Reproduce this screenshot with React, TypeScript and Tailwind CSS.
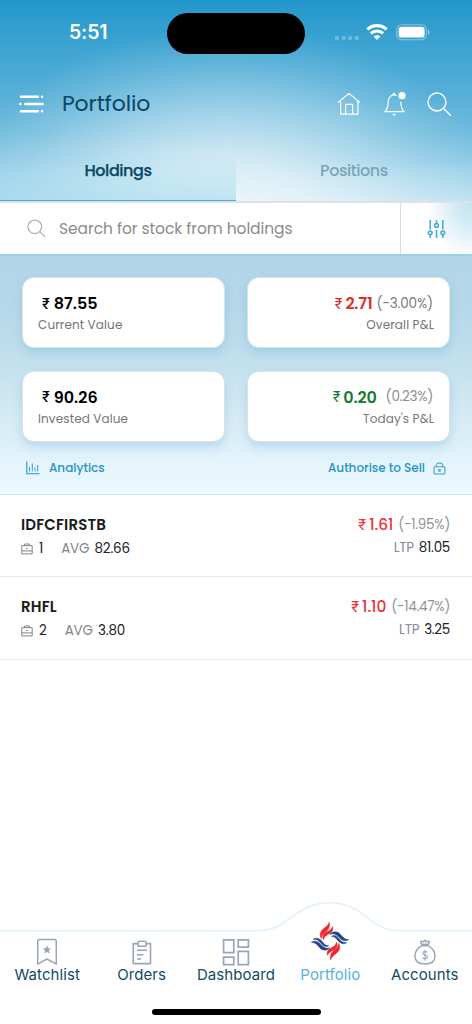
import type { ReactNode } from "react";

const holdings = [
  { symbol: "IDFCFIRSTB", qty: 1, avg: "82.66", pnl: "1.61", pct: "(-1.95%)", ltp: "81.05" },
  { symbol: "RHFL", qty: 2, avg: "3.80", pnl: "1.10", pct: "(-14.47%)", ltp: "3.25" },
];

function StatusBar() {
  return (
    <div className="flex h-[66px] items-center">
      <p className="w-[167px] pl-[69px] font-['Inter',sans-serif] text-[19.5px] font-semibold leading-none tracking-[-0.15px] text-white">5:51</p>
      <div className="h-[41px] w-[138px] rounded-full bg-black" />
      <div className="ml-[29px] flex items-center">
        <svg width="26" height="6" viewBox="0 0 26 6" className="mt-[9px]" fill="#fff" fillOpacity="0.27">
          <circle cx="3" cy="3" r="2.2" />
          <circle cx="9.7" cy="3" r="2.2" />
          <circle cx="16.2" cy="3" r="2.2" />
          <circle cx="22.8" cy="3" r="2.2" />
        </svg>
        <svg width="22" height="16" viewBox="0 0 22 16" className="ml-[6px] -mt-[2px]" fill="none" stroke="#fff" strokeWidth="3.1">
          <path d="M1.3 5.4C6.8 0.3 15.2 0.3 20.7 5.4" />
          <path d="M4.9 9.4C8.4 6.2 13.6 6.2 17.1 9.4" />
          <path d="M11 15.9L7.6 12.6C9.6 10.8 12.4 10.8 14.4 12.6Z" fill="#fff" stroke="none" />
        </svg>
        <svg width="35" height="17" viewBox="0 0 35 17" className="ml-[8px] -mt-[1px]">
          <rect x="0.7" y="0.7" width="29.6" height="15" rx="5" fill="none" stroke="#fff" strokeOpacity="0.4" strokeWidth="1.1" />
          <rect x="2.6" y="2.8" width="26" height="10.8" rx="3.2" fill="#fff" />
          <path d="M32 5.8C34 6.4 34 10 32 10.6Z" fill="#fff" fillOpacity="0.5" />
        </svg>
      </div>
    </div>
  );
}

function TitleBar() {
  return (
    <div className="flex h-[76px] items-center pl-[18px] pr-[20px]">
      <svg width="27" height="20" viewBox="0 0 27 20" stroke="#fff" strokeWidth="2.4" strokeLinecap="round">
        <path d="M3 2.8H20M24 2.8H24.1M2.2 10H2.5M7.3 10H24.5M3 17.2H20M24 17.2H24.1" />
      </svg>
      <h1 className="ml-[17px] text-[22px] leading-none tracking-[-0.12px] text-[#0b4764]">Portfolio</h1>
      <div className="ml-auto flex items-center">
        <svg width="24" height="24" viewBox="0 0 24 24" fill="none" stroke="#fff" strokeWidth="1.2" strokeLinecap="round" strokeLinejoin="round">
          <path d="M1.4 10.2L12 1.4L22.6 10.2M3.6 8.7V22.2H20.9V8.7M8.6 22V12.4H15.6V22" />
        </svg>
        <svg width="25" height="26" viewBox="0 0 25 26" className="ml-[21px]" fill="none" stroke="#fff" strokeWidth="1.2" strokeLinecap="round" strokeLinejoin="round">
          <path d="M14 4.3C8.8 2.8 6.2 7 6.2 11C6.2 16 5.3 18.3 2.8 20.7H22.2C19.8 18.5 18.9 16.3 18.8 11.2M10.8 3.4L12 2.3L13.2 3.4" />
          <path d="M11.2 23.4C11.7 24.1 12.7 24.1 13.2 23.4" />
          <circle cx="20" cy="4.7" r="3.6" fill="#fff" stroke="none" />
        </svg>
        <svg width="26" height="26" viewBox="0 0 26 26" className="ml-[19px]" fill="none" stroke="#fff" strokeWidth="1.4" strokeLinecap="round">
          <circle cx="11" cy="11" r="9" />
          <path d="M17.5 17.5L24.4 24.2" />
        </svg>
      </div>
    </div>
  );
}

function Card({ amount, label }: { amount: string; label: string }) {
  return (
    <div className="h-[71px] rounded-[12px] border border-[#dde1e4] bg-white px-[15px] pt-[16px] shadow-[0_5px_10px_rgba(90,170,215,0.3)]">
      <p className="ml-[4px] flex h-[20px] items-center gap-[4px] text-[16px] font-semibold text-black">
        <span className="-mt-[2px] font-['Inter',sans-serif] text-[14px] font-medium">₹</span>
        <span>{amount}</span>
      </p>
      <p className="mt-[3px] text-[12px] leading-[15px] tracking-[0.12px] text-[#757575]">{label}</p>
    </div>
  );
}

function PnlCard({ amount, pct, label, tone }: { amount: string; pct: ReactNode; label: string; tone: string }) {
  return (
    <div className="h-[71px] rounded-[12px] border border-[#dde1e4] bg-white px-[15px] pt-[16px] text-right shadow-[0_5px_10px_rgba(90,170,215,0.3)]">
      <p className={`mr-px flex h-[20px] items-center justify-end text-[16px] font-semibold ${tone}`}>
        <span className="-mt-[2px] mr-[3px] font-['Inter',sans-serif] text-[14px] font-normal">₹</span>
        <span className="tracking-[-0.2px]">{amount}</span>
        {pct}
      </p>
      <p className="mt-[3px] text-[12px] leading-[15px] tracking-[0.13px] text-[#757575]">{label}</p>
    </div>
  );
}

function Briefcase() {
  return (
    <svg width="12" height="12" viewBox="0 0 12 12" fill="none" stroke="#777" strokeWidth="0.9">
      <path d="M0.8 2.7H11.2V10.9H0.8ZM3.7 2.7V1H8.3V2.7M0.8 7.9H11.2" />
      <path d="M5.2 5.5H6.8" strokeWidth="1.2" />
    </svg>
  );
}

function Logo() {
  return (
    <svg width="40" height="40" viewBox="45 63 120 120">
      {[0, 180].map((turn) => (
        <g key={turn} transform={`rotate(${turn} 105 123)`} strokeWidth="1.5">
          <path fill="#ed2630" stroke="#ed2630" d="M103 66C106 84 97 92 89 98C82 103 79 108 79 116C72 103 77 93 87 85C96 78 101 74 103 66Z" />
          <path fill="#ed2630" stroke="#ed2630" d="M113 80C116 94 108 99 100 103C91 108 86 111 86 120C80 109 84 102 94 96C104 91 110 87 113 80Z" />
          <path fill="#224487" stroke="#224487" d="M105 103C114 93 128 93 136 103C143 112 150 119 161 119C151 126 140 121 132 112C124 103 115 99 105 103Z" />
          <path fill="#224487" stroke="#224487" d="M109 109C118 103 126 108 132 116C138 124 146 129 155 128C146 135 135 130 128 121C122 113 117 109 109 109Z" />
        </g>
      ))}
    </svg>
  );
}

function NavItem({ label, active, children }: { label: string; active?: boolean; children: ReactNode }) {
  return (
    <div className="flex w-[94.4px] flex-col items-center">
      <div className="flex h-[34px] items-end justify-center">{children}</div>
      <span className={`text-[15px] leading-[17px] ${active ? "text-[#58b3da]" : "text-[#124b62]"}`}>{label}</span>
    </div>
  );
}

function BottomNav() {
  return (
    <nav className="relative mt-auto h-[124px] font-['Inter',sans-serif] tracking-[0.08px]">
      <svg width="472" height="34" viewBox="0 0 472 34" className="absolute left-0 top-0" fill="none" stroke="#e0f1fb" strokeWidth="1.6">
        <path d="M0 30.7H259C288 30.7 294 3 330 2.8C366 3 368 30.7 399 30.7H472" />
      </svg>
      <div className="relative flex pt-[32px]">
        <NavItem label="Watchlist">
          <svg width="22" height="28" viewBox="0 0 22 28" fill="none" stroke="#9ba4b9" strokeWidth="1.5" strokeLinejoin="round">
            <path d="M3.6 1.5H18.4Q20.3 1.5 20.3 3.4V26.2L11 21L1.7 26.2V3.4Q1.7 1.5 3.6 1.5Z" />
            <path d="M11 7.2L12.2 10.2L15.3 10.4L12.9 12.5L13.7 15.6L11 13.9L8.3 15.6L9.1 12.5L6.7 10.4L9.8 10.2Z" fill="#9ba4b9" stroke="none" />
          </svg>
        </NavItem>
        <NavItem label="Orders">
          <svg width="20" height="26" viewBox="0 0 20 26" fill="none" stroke="#9ba4b9" strokeWidth="1.6" strokeLinejoin="round">
            <path d="M6 3.6H1.3V23.6H18.5V3.6H14" />
            <path d="M7.3 1.2H12.7Q14 1.2 14 2.5V6.2H6V2.5Q6 1.2 7.3 1.2ZM5 10.3H15M5 14.8H11.5M5 19H9" />
          </svg>
        </NavItem>
        <NavItem label="Dashboard">
          <svg width="28" height="28" viewBox="0 0 28 28" fill="none" stroke="#9ba4b9" strokeWidth="1.7">
            <path d="M1.6 1.8H11.8V14.6H1.6ZM1.6 19.2H11.8V26.6H1.6ZM16.2 1.8H26.4V9.2H16.2ZM16.2 13.4H26.4V26.6H16.2Z" />
          </svg>
        </NavItem>
        <NavItem label="Portfolio" active>
          <div className="mb-[5px]">
            <Logo />
          </div>
        </NavItem>
        <NavItem label="Accounts">
          <svg width="22" height="27" viewBox="0 0 22 27" fill="none" stroke="#9ba4b9" strokeWidth="1.4" strokeLinejoin="round">
            <path d="M7.8 6.8C3.7 8.8 1 12.8 1 17C1 22.5 4.7 25 11 25S21 22.5 21 17C21 12.8 18.3 8.8 14.2 6.8Z" />
            <path d="M8.2 6.5L6.5 2.6C8 1.6 8.8 2.8 9.5 2.8C10.2 2.8 10.2 1.3 11 1.3S11.8 2.8 12.5 2.8C13.2 2.8 14 1.6 15.5 2.6L13.8 6.5M8.2 5.2H13.8" />
            <path d="M13.4 13.4C12.8 12.3 8.8 12 8.8 14.2C8.8 16.7 13.5 15.3 13.5 18C13.5 20.3 9.2 20 8.5 18.7M11 11V21.7" strokeWidth="1.1" />
          </svg>
        </NavItem>
      </div>
      <div className="mx-auto mt-[26px] h-[5.5px] w-[169px] rounded-full bg-black" />
    </nav>
  );
}

export default function App() {
  return (
    <div className="flex h-[1024px] w-[472px] flex-col overflow-hidden bg-white font-['Poppins','Inter',sans-serif]">
      <header className="h-[203px] shrink-0 bg-[linear-gradient(to_bottom,transparent_80%,rgba(255,255,255,0.3)_100%),radial-gradient(ellipse_56%_85%_at_48%_98%,rgba(255,255,255,0.68)_0%,rgba(255,255,255,0.6)_25%,rgba(255,255,255,0.4)_50%,rgba(255,255,255,0.15)_78%,transparent_100%),linear-gradient(to_bottom,#2297cb_0%,#3ca3d1_22%,#58b0d8_48%,#72bcdd_66%,#96cfe7_84%,#a5d6eb_100%)]">
        <StatusBar />
        <TitleBar />
        <div className="flex h-[61px] border-b-2 border-[#dce2e7] text-[16px] font-medium leading-none tracking-[-0.45px]">
          <div className="flex h-[59px] w-1/2 justify-center border-b-[1.5px] border-[#56acd0] bg-[linear-gradient(to_bottom,transparent_20%,rgba(130,205,232,0.42)_100%)] pt-[21px] text-[#0b4764] [-webkit-text-stroke:0.25px_#0b4764]">
            Holdings
          </div>
          <div className="flex w-1/2 justify-center pt-[21px] text-[#7aa5b8]">Positions</div>
        </div>
      </header>

      <div className="flex h-[51px] shrink-0 items-center bg-white">
        <svg width="20" height="20" viewBox="0 0 20 20" className="ml-[27px]" fill="none" stroke="#aaa" strokeWidth="1.1" strokeLinecap="round">
          <circle cx="7.8" cy="7.8" r="6.8" />
          <path d="M12.8 12.8L18 17.6" />
        </svg>
        <p className="ml-[12px] text-[15.5px] leading-none tracking-[-0.08px] text-[#8b8b8b]">Search for stock from holdings</p>
        <div className="ml-auto flex h-full w-[72px] items-center justify-center border-l border-[#dedede] bg-[radial-gradient(ellipse_45px_56px_at_100%_0%,#c4e4f1_0%,#cfe9f4_30%,#ffffff_100%)]">
          <svg width="19" height="20" viewBox="0 0 19 20" fill="none" stroke="#42aad5" strokeWidth="1.5">
            <path d="M3.2 1V10.4M3.2 15.4V19M9.5 1V4M9.5 11V19M15.8 1V10.4M15.8 15.4V19" />
            <circle cx="3.2" cy="13.8" r="1.9" />
            <circle cx="9.5" cy="6.5" r="1.9" />
            <circle cx="15.8" cy="13.8" r="1.9" />
          </svg>
        </div>
      </div>

      <section className="h-[241px] shrink-0 border-b border-t-2 border-b-[#cbeaf6] border-t-[#9bcfe6] bg-[linear-gradient(to_bottom,#b2d5e8_0%,#b5d7e9_20%,#c3e0ed_45%,#d8edf6_72%,#edfaff_100%)] px-[22px] pt-[21px]">
        <div className="grid grid-cols-2 gap-x-[22px] gap-y-[22.5px]">
          <Card amount="87.55" label="Current Value" />
          <PnlCard
            amount="2.71"
            label="Overall P&L"
            tone="text-[#dc2f26]"
            pct={<span className="ml-[4px] text-[13.5px] font-normal tracking-[-0.15px] text-[#7b7b7b]">(-3.00%)</span>}
          />
          <Card amount="90.26" label="Invested Value" />
          <PnlCard
            amount="0.20"
            label="Today's P&L"
            tone="text-[#157a34]"
            pct={<span className="ml-[9px] text-[13.5px] font-normal tracking-[-0.3px] text-[#8b8f91]">(0.23%)</span>}
          />
        </div>
        <div className="mt-[18px] flex items-center text-[12px] font-medium leading-[16px] text-[#2794c7]">
          <svg width="14" height="14" viewBox="0 0 14 14" className="ml-[4px] mr-[9px] mt-px" fill="none" stroke="#2794c7">
            <path d="M0.8 0.5V12.7H13.5" strokeWidth="1.1" />
            <path d="M3.5 6V10.5M6.3 2.5V10.5M9 6.5V10.5M11.7 4V10.5" strokeWidth="0.9" />
          </svg>
          Analytics
          <span className="ml-auto">Authorise to Sell</span>
          <svg width="13" height="13" viewBox="0 0 13 13" className="ml-[8px] mr-[4px] mt-px" fill="none" stroke="#38a0cc" strokeWidth="1.1">
            <rect x="1" y="4.8" width="11" height="7.2" rx="1.4" />
            <path d="M3 4.8C3 -0.2 10 -0.2 10 4.8" />
            <circle cx="6.5" cy="8.4" r="0.9" />
          </svg>
        </div>
      </section>

      <main>
        {holdings.map((h) => (
          <div key={h.symbol} className="flex h-[82.3px] justify-between border-b-[1.5px] border-[#e9e9e9] pl-[21px] pr-[22px] pt-[20px]">
            <div>
              <p className="text-[15px] font-semibold leading-[20px] tracking-[0.15px] text-[#1b1b1b]">{h.symbol}</p>
              <p className="mt-[5px] flex items-center text-[13.5px] leading-[18px] tracking-[-0.15px] text-[#222]">
                <span className="-mt-px mr-[6px]">
                  <Briefcase />
                </span>
                {h.qty}
                <span className="ml-[18px] mr-[5px] text-[#858585]">AVG</span>
                {h.avg}
              </p>
            </div>
            <div className="text-right">
              <p className="flex items-center justify-end leading-[20px]">
                <span className="mr-[3px] font-['Inter',sans-serif] text-[14.5px] text-[#ee3638]">₹</span>
                <span className="text-[15.5px] font-medium tracking-[-0.1px] text-[#ee3638]">{h.pnl}</span>
                <span className="ml-[5px] text-[13.5px] tracking-[-0.3px] text-[#8f9494]">{h.pct}</span>
              </p>
              <p className="mt-[4px] text-[13.5px] leading-[18px] tracking-[-0.3px] text-[#222]">
                <span className="mr-[5px] text-[#898999]">LTP</span>
                {h.ltp}
              </p>
            </div>
          </div>
        ))}
      </main>

      <BottomNav />
    </div>
  );
}
